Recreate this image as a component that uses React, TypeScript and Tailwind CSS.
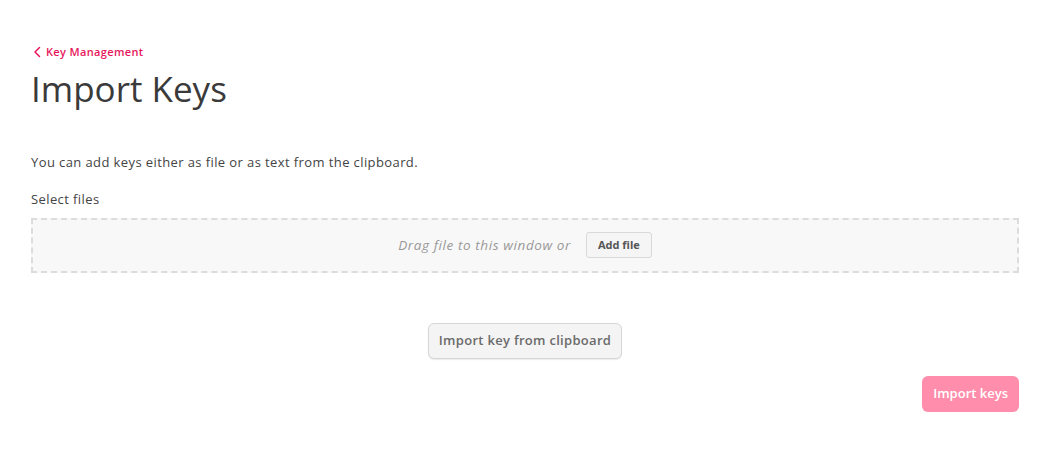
import React from "react";

const font = { fontFamily: "'Open Sans', Lato, sans-serif" };

const ChevronLeft = () => (
  <svg className="h-[12px] w-[9px]" viewBox="0 0 9 12" fill="none" stroke="currentColor" strokeWidth="1.5" strokeLinecap="round" strokeLinejoin="round">
    <path d="M6.5 1.5 L2 6 L6.5 10.5" />
  </svg>
);

const App = () => {
  return (
    <div className="min-h-[467px] w-full bg-white text-[#3c3c3c]" style={font}>
      <div className="pl-[31px] pr-[25px] pt-[44px]">
        {/* Breadcrumb */}
        <a href="#" className="flex items-center gap-[4px] pl-[2px] text-[11px] font-semibold tracking-[0.35px] text-[#e6175c]">
          <ChevronLeft />
          <span>Key Management</span>
        </a>
        <h1 className="mt-[6px] text-[35px] leading-[44px] text-[#3a3a3a]">Import Keys</h1>

        <p className="mt-[42px] text-[13px] leading-[18px] tracking-[0.4px] text-[#444]">
          You can add keys either as file or as text from the clipboard.
        </p>

        <div className="mt-[19px] text-[13px] leading-[18px] tracking-[0.4px] text-[#444]">Select files</div>

        {/* Drop zone */}
        <div className="mt-[10px] flex h-[55px] items-center justify-center gap-[15px] border-2 border-dashed border-[#dcdcdc] bg-[#f8f8f8]">
          <span className="text-[13.5px] italic tracking-[0.6px] text-[#999]">Drag file to this window or</span>
          <button className="h-[26px] rounded-[3px] border border-[#d9d9d9] bg-[#f5f5f5] px-[11px] text-[11px] font-bold text-[#555]">
            Add file
          </button>
        </div>

        <div className="mt-[50px] flex justify-center">
          <button className="h-[36px] rounded-[6px] border border-[#d6d6d6] bg-[#f4f4f4] px-[10px] text-[13px] font-semibold tracking-[0.3px] text-[#6b6b6b] shadow-[0_1px_1px_rgba(0,0,0,0.08)]">
            Import key from clipboard
          </button>
        </div>

        <div className="mt-[17px] flex justify-end">
          <button className="h-[36px] rounded-[6px] bg-[#ff8dab] px-[11px] text-[13px] font-semibold text-white">
            Import keys
          </button>
        </div>
      </div>
    </div>
  );
};

export default App;
